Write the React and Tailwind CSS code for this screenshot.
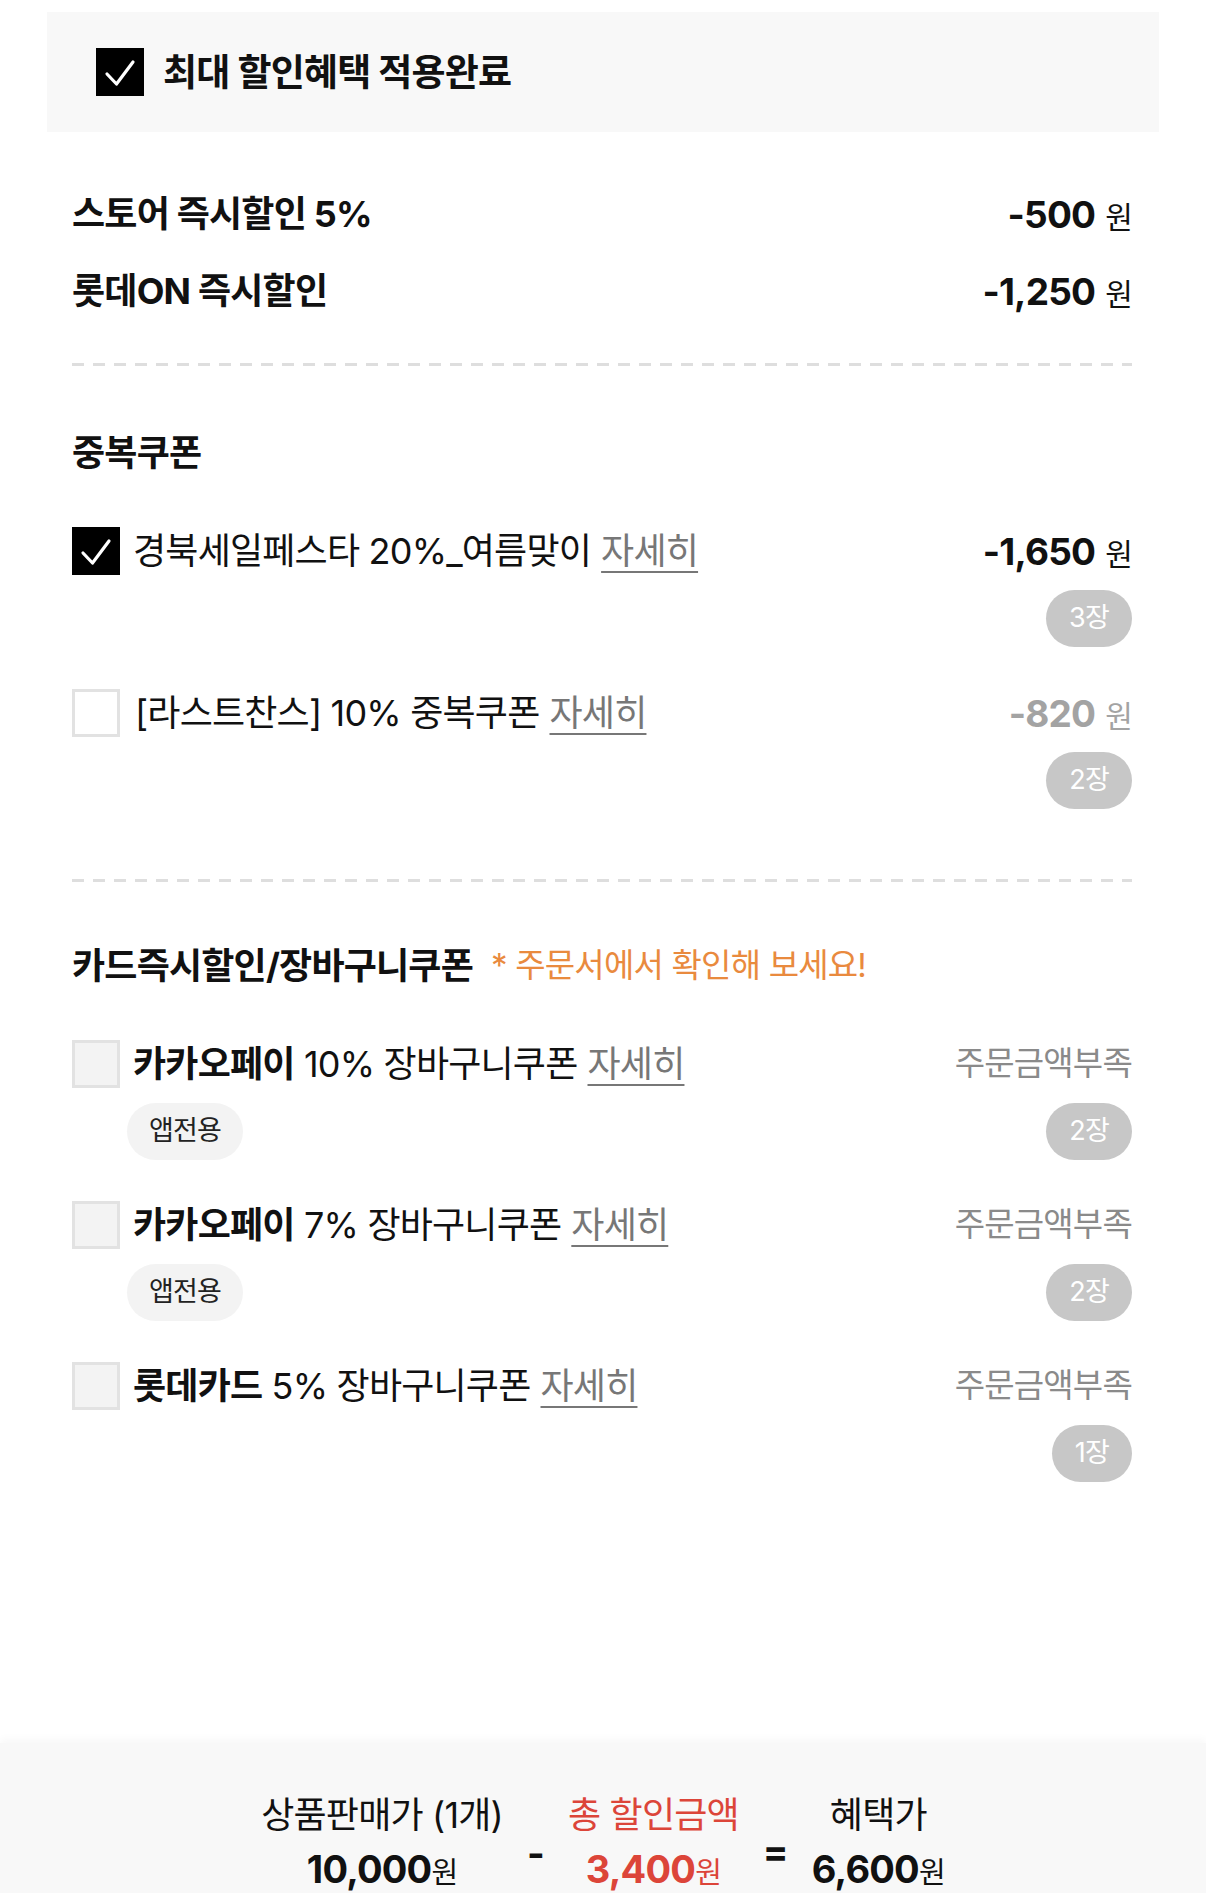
import React from "react";

function CheckBox({ state }) {
  if (state === "checked") {
    return (
      <span className="w-[48px] h-[48px] shrink-0 bg-black flex items-center justify-center">
        <svg width="48" height="48" viewBox="0 0 48 48" fill="none">
          <path d="M11 26 L20.5 36 L37 14" stroke="#fff" strokeWidth="3.2" strokeLinecap="round" strokeLinejoin="round" />
        </svg>
      </span>
    );
  }
  if (state === "disabled") {
    return <span className="w-[48px] h-[48px] shrink-0 bg-[#f3f3f3] border-[3px] border-[#e2e2e2]" />;
  }
  return <span className="w-[48px] h-[48px] shrink-0 bg-white border-[3px] border-[#e2e2e2]" />;
}

function Amount({ value, muted }) {
  return (
    <span className={`flex items-baseline ${muted ? "text-[#a3a3a3]" : "text-[#111]"}`}>
      <span className="text-[37px] font-bold leading-none">{value}</span>
      <span className="ml-[10px] text-[30px] leading-none">원</span>
    </span>
  );
}

function Detail() {
  return (
    <span className="ml-[10px] text-[#777] underline decoration-[2px] underline-offset-[7px]">자세히</span>
  );
}

function CountPill({ n }) {
  return (
    <span className="h-[57px] px-[23px] rounded-full bg-[#c7c7c7] text-white text-[27px] flex items-center">
      {n}장
    </span>
  );
}

function Dashed() {
  return <div className="h-[3px] bg-[repeating-linear-gradient(to_right,#dedede_0_12px,transparent_12px_21px)]" />;
}

function CardCoupon({ brand, text, appOnly, count, className }) {
  return (
    <div className={className}>
      <div className="h-[48px] flex items-center justify-between">
        <div className="flex items-center">
          <CheckBox state="disabled" />
          <span className="ml-[13px] text-[36px] whitespace-nowrap">
            <span className="font-bold">{brand}</span> {text}
            <Detail />
          </span>
        </div>
        <span className="text-[33px] text-[#8a8a8a]">주문금액부족</span>
      </div>
      <div className="mt-[15px] flex items-center justify-between">
        {appOnly ? (
          <span className="ml-[55px] h-[57px] px-[22px] rounded-full bg-[#f3f3f3] text-[#222] text-[27px] flex items-center">
            앱전용
          </span>
        ) : (
          <span />
        )}
        <CountPill n={count} />
      </div>
    </div>
  );
}

export default function App() {
  return (
    <div className="w-[1206px] h-[1893px] overflow-hidden bg-white flex flex-col font-['Inter','Noto_Sans_CJK_KR',sans-serif] text-[#111] tracking-[-0.05em]">
      {/* applied banner */}
      <div className="mx-[47px] mt-[12px] h-[120px] shrink-0 bg-[#f8f8f8] flex items-center pl-[49px]">
        <CheckBox state="checked" />
        <span className="ml-[19px] text-[37px] font-bold leading-none">최대 할인혜택 적용완료</span>
      </div>

      <div className="flex-1 pl-[72px] pr-[74px]">
        {/* instant discounts */}
        <div className="mt-[58px] h-[48px] flex items-center justify-between">
          <span className="text-[36px] font-bold">스토어 즉시할인 5%</span>
          <Amount value="-500" />
        </div>
        <div className="mt-[29px] h-[48px] flex items-center justify-between">
          <span className="text-[36px] font-bold">롯데ON 즉시할인</span>
          <Amount value="-1,250" />
        </div>

        <div className="mt-[48px]">
          <Dashed />
        </div>

        {/* stackable coupons */}
        <div className="mt-[63px] h-[48px] flex items-center">
          <span className="text-[36px] font-bold">중복쿠폰</span>
        </div>

        <div className="mt-[50px] h-[48px] flex items-center justify-between">
          <div className="flex items-center">
            <CheckBox state="checked" />
            <span className="ml-[13px] text-[36px] whitespace-nowrap">
              경북세일페스타 20%_여름맞이
              <Detail />
            </span>
          </div>
          <Amount value="-1,650" />
        </div>
        <div className="mt-[15px] flex justify-end">
          <CountPill n={3} />
        </div>

        <div className="mt-[42px] h-[48px] flex items-center justify-between">
          <div className="flex items-center">
            <CheckBox state="empty" />
            <span className="ml-[15px] text-[36px] whitespace-nowrap">
              [라스트찬스] 10% 중복쿠폰
              <Detail />
            </span>
          </div>
          <Amount value="-820" muted />
        </div>
        <div className="mt-[15px] flex justify-end">
          <CountPill n={2} />
        </div>

        <div className="mt-[70px]">
          <Dashed />
        </div>

        {/* card / cart coupons */}
        <div className="mt-[60px] h-[48px] flex items-center">
          <span className="text-[36px] font-bold">카드즉시할인/장바구니쿠폰</span>
          <span className="ml-[18px] text-[33px] text-[#e98a3e]">* 주문서에서 확인해 보세요!</span>
        </div>

        <CardCoupon className="mt-[50px]" brand="카카오페이" text="10% 장바구니쿠폰" appOnly count={2} />
        <CardCoupon className="mt-[41px]" brand="카카오페이" text="7% 장바구니쿠폰" appOnly count={2} />
        <CardCoupon className="mt-[41px]" brand="롯데카드" text="5% 장바구니쿠폰" count={1} />
      </div>

      {/* price summary */}
      <div className="h-[150px] shrink-0 bg-[#f8f8f8] shadow-[0_-4px_8px_rgba(0,0,0,0.03)] pt-[50px] flex justify-center items-start gap-[24px]">
        <div className="flex flex-col items-center">
          <span className="h-[44px] leading-[44px] text-[36px]">상품판매가 (1개)</span>
          <span className="mt-[10px] h-[44px] leading-[44px] flex items-baseline">
            <span className="text-[38px] font-bold">10,000</span>
            <span className="text-[29px]">원</span>
          </span>
        </div>
        <span className="mt-[38px] text-[38px] font-bold leading-[44px]">-</span>
        <div className="flex flex-col items-center text-[#dc4539]">
          <span className="h-[44px] leading-[44px] text-[36px]">총 할인금액</span>
          <span className="mt-[10px] h-[44px] leading-[44px] flex items-baseline">
            <span className="text-[38px] font-bold">3,400</span>
            <span className="text-[29px]">원</span>
          </span>
        </div>
        <span className="mt-[36px] text-[38px] font-bold leading-[44px]">=</span>
        <div className="flex flex-col items-center">
          <span className="h-[44px] leading-[44px] text-[36px]">혜택가</span>
          <span className="mt-[10px] h-[44px] leading-[44px] flex items-baseline">
            <span className="text-[38px] font-bold">6,600</span>
            <span className="text-[29px]">원</span>
          </span>
        </div>
      </div>
    </div>
  );
}
